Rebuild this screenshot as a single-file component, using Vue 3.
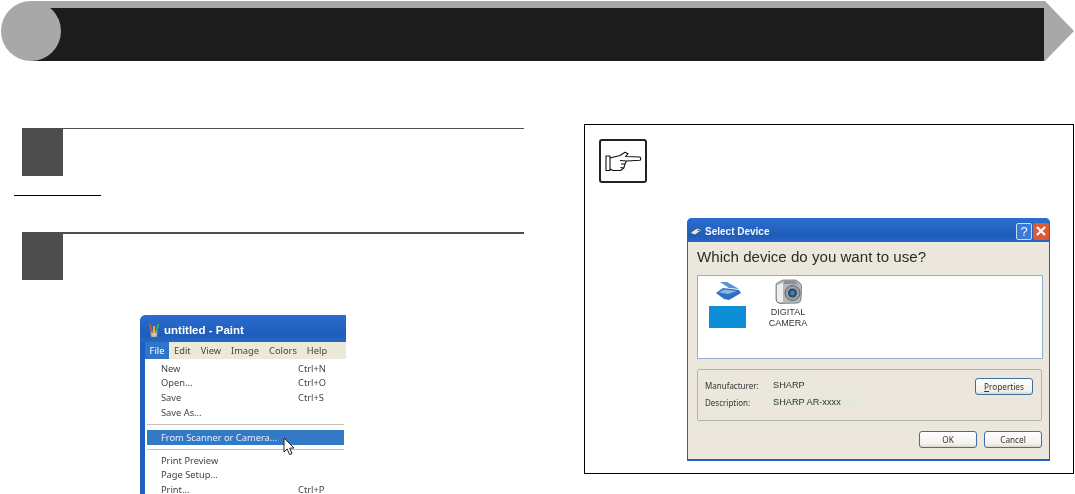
<script setup>
const menu = [
  { label: 'New', key: 'Ctrl+N' },
  { label: 'Open...', key: 'Ctrl+O' },
  { label: 'Save', key: 'Ctrl+S' },
  { label: 'Save As...', key: '' },
  { sep: 'a' },
  { label: 'From Scanner or Camera...', key: '', active: true },
  { sep: 'b' },
  { label: 'Print Preview', key: '' },
  { label: 'Page Setup...', key: '' },
  { label: 'Print...', key: 'Ctrl+P' }
]
const menubar = ['Edit', 'View', 'Image', 'Colors', 'Help']
</script>

<template>
  <div class="page">
    <header class="banner">
      <div class="bar"><div class="band"></div></div>
      <div class="disc"></div>
    </header>

    <main class="cols">
      <section class="left">
        <div class="step"><div class="sq"></div><div class="rule thin"></div></div>
        <div class="short"></div>
        <div class="step second"><div class="sq"></div><div class="rule"></div></div>

        <div class="paint">
          <div class="p-title">
            <svg class="p-icon" width="12" height="15" viewBox="0 0 12 15">
              <path d="M2.5 8 L9.5 8 L8.8 14 L3.2 14 Z" fill="#c9c7b0" stroke="#6f7a7f" stroke-width=".6"/>
              <path d="M1.5 1 L4.5 10" stroke="#d9542b" stroke-width="1.8"/>
              <path d="M6 3 L6 10" stroke="#e3c93f" stroke-width="1.6"/>
              <path d="M10.5 1 L7.5 10" stroke="#4fae4a" stroke-width="1.8"/>
            </svg>
            <span>untitled - Paint</span>
          </div>
          <div class="p-menubar">
            <span class="m-file">File</span>
            <span v-for="m in menubar" :key="m" class="m-item">{{ m }}</span>
          </div>
          <ul class="p-menu">
            <template v-for="(it, i) in menu" :key="i">
              <li v-if="it.sep" class="p-sep" :class="it.sep"></li>
              <li v-else class="p-row" :class="{ on: it.active }">
                <span class="p-label">{{ it.label }}</span>
                <span class="p-key">{{ it.key }}</span>
                <svg v-if="it.active" class="cursor" width="13" height="19" viewBox="0 0 13 19">
                  <path d="M1 1 L1 15 L4.2 12 L6.6 17.6 L9 16.6 L6.6 11.2 L11 11 Z" fill="#fff" stroke="#222" stroke-width="1"/>
                </svg>
              </li>
            </template>
          </ul>
        </div>
      </section>

      <aside class="note">
        <div class="hand">
          <svg width="37" height="21" viewBox="0 0 37 21" fill="none" stroke="#111" stroke-width="1.1" stroke-linejoin="round">
            <path d="M1 5 L5 5 L5 19.5 L1 19.5 Z"/>
            <path d="M5 7 L15 4.5 L20 1.2 L23 2.8 L20.5 5.5 L35 6 Q36.5 7.8 35 9.3 L21.5 10 L20 13 L18.8 17 L15.5 19.5 L8 19.5 L5 18"/>
            <path d="M15 9.5 L21.5 10 M16 13 L20 13 M15.5 16.5 L18.8 17"/>
          </svg>
        </div>

        <div class="dialog">
          <div class="d-title">
            <svg class="d-ico" width="14" height="10" viewBox="0 0 14 10">
              <path d="M1 7 L8 2 L13 4 L6 9 Z" fill="#dfe6ef" stroke="#33445c" stroke-width=".7"/>
              <path d="M8 4 L11 5" stroke="#33445c" stroke-width=".8"/>
            </svg>
            <span class="d-name">Select Device</span>
            <span class="d-help">?</span>
            <span class="d-close">
              <svg width="12" height="12" viewBox="0 0 12 12"><path d="M2 2 L10 10 M10 2 L2 10" stroke="#fff" stroke-width="2.2"/></svg>
            </span>
          </div>
          <div class="d-body">
            <div class="d-q">Which device do you want to use?</div>
            <div class="d-list">
              <div class="dev scanner">
                <svg width="26" height="20" viewBox="0 0 26 20">
                  <path d="M1 12 L8 7 L24 9 L26 12 L14 19 L9 18 Z" fill="#2f6fc0"/>
                  <path d="M5 1 L12 1 L24 8 L14 7 Z" fill="#5a92d6"/>
                  <path d="M4 11.5 L9 8.5 L22 10 L13 13 Z" fill="#8ab6e6"/>
                </svg>
                <div class="dev-sel"></div>
              </div>
              <div class="dev camera">
                <svg width="28" height="25" viewBox="0 0 28 25">
                  <path d="M2 6 Q2 4 5 3 L9 1 L22 1 L26 4 Q27.5 5 27.5 8 L27 20 Q27 23 24 24 L6 24.5 Q2 24 2 20 Z" fill="#b4b8bc" stroke="#5f6368" stroke-width=".7"/>
                  <path d="M3 6 L9 4 L9 23 L4 23 Q3 23 3 20 Z" fill="#eceeef"/>
                  <path d="M10 2 L21 2 L24 5 L10 5 Z" fill="#8d9196"/>
                  <circle cx="18.5" cy="14" r="7.5" fill="#9ca0a5" stroke="#4f5358" stroke-width=".8"/>
                  <circle cx="18.5" cy="14" r="4.5" fill="#2f4a68"/>
                  <circle cx="18.5" cy="14" r="2.2" fill="#3e86c6"/>
                </svg>
                <div class="dev-name">DIGITAL<br>CAMERA</div>
              </div>
            </div>
            <div class="d-group">
              <dl class="info">
                <div class="info-row"><dt>Manufacturer:</dt><dd>SHARP</dd></div>
                <div class="info-row"><dt>Description:</dt><dd class="tint">SHARP AR-xxxx</dd></div>
              </dl>
              <button class="btn props"><u>P</u>roperties</button>
            </div>
            <div class="d-actions">
              <button class="btn">OK</button>
              <button class="btn">Cancel</button>
            </div>
          </div>
        </div>
      </aside>
    </main>
  </div>
</template>

<style>
html, body { margin: 0; background: #fff; }
</style>

<style scoped>
.page {
  width: 1075px;
  height: 494px;
  overflow: hidden;
  background: #fff;
  font-family: "Liberation Sans", Arial, sans-serif;
  padding-top: 1px;
  box-sizing: border-box;
}
.banner {
  position: relative;
  height: 60px;
  margin-left: 1px;
  width: 1073px;
}
.bar {
  margin-left: 30px;
  height: 60px;
  padding-top: 7px;
  box-sizing: border-box;
  background: #a8a8a8;
  clip-path: polygon(0 0, 1014px 0, 1043px 30px, 1014px 60px, 0 60px);
}
.band {
  width: 1013px;
  height: 53px;
  background: #1c1c1c;
}
.disc {
  position: absolute;
  left: 0;
  top: 0;
  width: 60px;
  height: 60px;
  border-radius: 50%;
  background: #a8a8a8;
}
.cols {
  display: flex;
  padding: 63px 0 0 14px;
}
.left {
  width: 510px;
  padding-top: 4px;
}
.step {
  display: flex;
  margin-left: 8px;
  height: 48px;
}
.step.second { margin-top: 36px; }
.sq {
  width: 41px;
  height: 48px;
  background: #4d4d4d;
}
.rule {
  flex: 1;
  height: 2px;
  background: #4d4d4d;
}
.rule.thin { height: 1px; }
.short {
  width: 87px;
  height: 1px;
  margin-top: 19px;
  background: #000;
}
.paint {
  margin: 35px 0 0 126px;
  width: 206px;
  height: 179px;
  overflow: hidden;
  border-radius: 6px 0 0 0;
  background: #1f5fbd;
  font-size: 9.3px;
  color: #444;
  font-family: "Noto Sans", sans-serif;
  filter: blur(0.3px);
}
.p-title {
  display: flex;
  align-items: center;
  height: 27px;
  padding: 3px 0 0 8px;
  box-sizing: border-box;
  background: linear-gradient(#2a6dd0, #1f5dba 70%, #2467c6);
  color: #fff;
  font-size: 11.5px;
  font-weight: 700;
  font-family: "Liberation Sans", sans-serif;
}
.p-icon { margin-right: 4px; }
.p-menubar {
  display: flex;
  align-items: center;
  height: 17px;
  margin-left: 5px;
  background: #ece9d8;
}
.m-file {
  width: 24px;
  height: 17px;
  line-height: 17px;
  text-align: center;
  background: #2f76c8;
  color: #fff;
  margin-right: -5px;
}
.m-item { margin-left: 10px; }
.p-menu {
  list-style: none;
  margin: 0 0 0 5px;
  padding: 2.5px 2px 0;
  background: #fff;
  height: 135px;
}
.p-row {
  position: relative;
  display: flex;
  height: 14.7px;
  line-height: 14.7px;
  padding-left: 14px;
}
.p-row.on {
  height: 15px;
  line-height: 15px;
  background: #3279c8;
  color: #e8f0fa;
}
.p-label { width: 137px; }
.cursor {
  position: absolute;
  left: 136px;
  top: 7px;
}
.p-sep {
  height: 1px;
  background: #c4c2b6;
}
.p-sep.a { margin: 3.5px 0 5.5px; }
.p-sep.b { margin: 4px 0 3.5px; }
.note {
  margin-left: 60px;
  width: 490px;
  height: 350px;
  box-sizing: border-box;
  border: 1px solid #000;
  padding: 14px 0 0 14px;
}
.hand {
  display: flex;
  align-items: center;
  justify-content: center;
  width: 48px;
  height: 44px;
  box-sizing: border-box;
  border: 2.5px solid #222;
  border-radius: 3px;
}
.dialog {
  margin: 35px 0 0 88px;
  width: 363px;
  height: 243px;
  border-radius: 5px 5px 0 0;
  overflow: hidden;
  background: #1f5fbd;
  font-family: "Noto Sans", sans-serif;
  color: #333;
  filter: blur(0.3px);
}
.d-title {
  display: flex;
  align-items: center;
  height: 24px;
  padding: 2px 1px 0 2px;
  box-sizing: border-box;
  background: linear-gradient(#2a6fd2, #1f5cb8 75%, #2568c8);
  color: #f2f6fc;
  font-size: 10px;
  font-weight: 700;
  font-family: "Liberation Sans", sans-serif;
}
.d-ico { margin-right: 2px; }
.d-name { flex: 1; }
.d-help {
  width: 16px;
  height: 17px;
  line-height: 15px;
  text-align: center;
  margin-right: 1px;
  border: 1px solid #c8d8f0;
  border-radius: 2px;
  box-sizing: border-box;
  background: #3a7bd6;
  font-size: 13px;
  font-weight: 400;
}
.d-close {
  display: flex;
  align-items: center;
  justify-content: center;
  width: 16px;
  height: 17px;
  border-radius: 2px;
  background: #dd5a32;
}
.d-body {
  margin: 0 1px;
  height: 217px;
  padding: 5px 6px 0 9px;
  box-sizing: border-box;
  background: #ebe7dc;
}
.d-q {
  height: 22px;
  line-height: 20px;
  font-family: "Liberation Sans", sans-serif;
  font-size: 15.1px;
  color: #2b2b2b;
}
.d-list {
  display: flex;
  gap: 20px;
  height: 84px;
  box-sizing: border-box;
  margin-top: 6px;
  padding: 3px 0 0 11px;
  background: #fff;
  border: 1px solid #8fb0d4;
}
.dev {
  display: flex;
  flex-direction: column;
  align-items: center;
  width: 37px;
}
.scanner svg { margin-top: 2px; }
.dev-sel {
  width: 37px;
  height: 22px;
  margin-top: 5px;
  background: #0f8ed8;
}
.camera { width: 44px; }
.dev-name {
  font-size: 9px;
  line-height: 10.5px;
  text-align: center;
  margin-top: 3px;
  font-family: "Liberation Sans", sans-serif;
  white-space: nowrap;
}
.d-group {
  display: flex;
  justify-content: space-between;
  height: 52px;
  box-sizing: border-box;
  margin: 10px 1px 0 0;
  padding: 8px 8px 0 7px;
  border: 1px solid #b5b3a8;
  border-radius: 2px;
}
.info { margin: 0; font-size: 8px; margin-top: -1px; }
.info-row {
  display: flex;
  height: 17px;
  line-height: 17px;
}
.info dt { width: 68px; }
.info dd {
  margin: 0;
  font-size: 9.2px;
  font-family: "Liberation Sans", sans-serif;
}
.info dd.tint {
  width: 86px;
  height: 11px;
  line-height: 11px;
  margin-top: 3px;
  background: #e4e9dc;
}
.btn {
  width: 58px;
  height: 17px;
  padding: 0;
  box-sizing: border-box;
  border: 1px solid #3f6f9e;
  border-radius: 3px;
  background: linear-gradient(#fff, #f3f1ea 80%, #d9d5c8);
  font-family: "Noto Sans", sans-serif;
  font-size: 8.2px;
  color: #333;
}
.d-actions {
  display: flex;
  justify-content: flex-end;
  gap: 7px;
  margin-top: 10px;
  padding-right: 1px;
}
</style>
